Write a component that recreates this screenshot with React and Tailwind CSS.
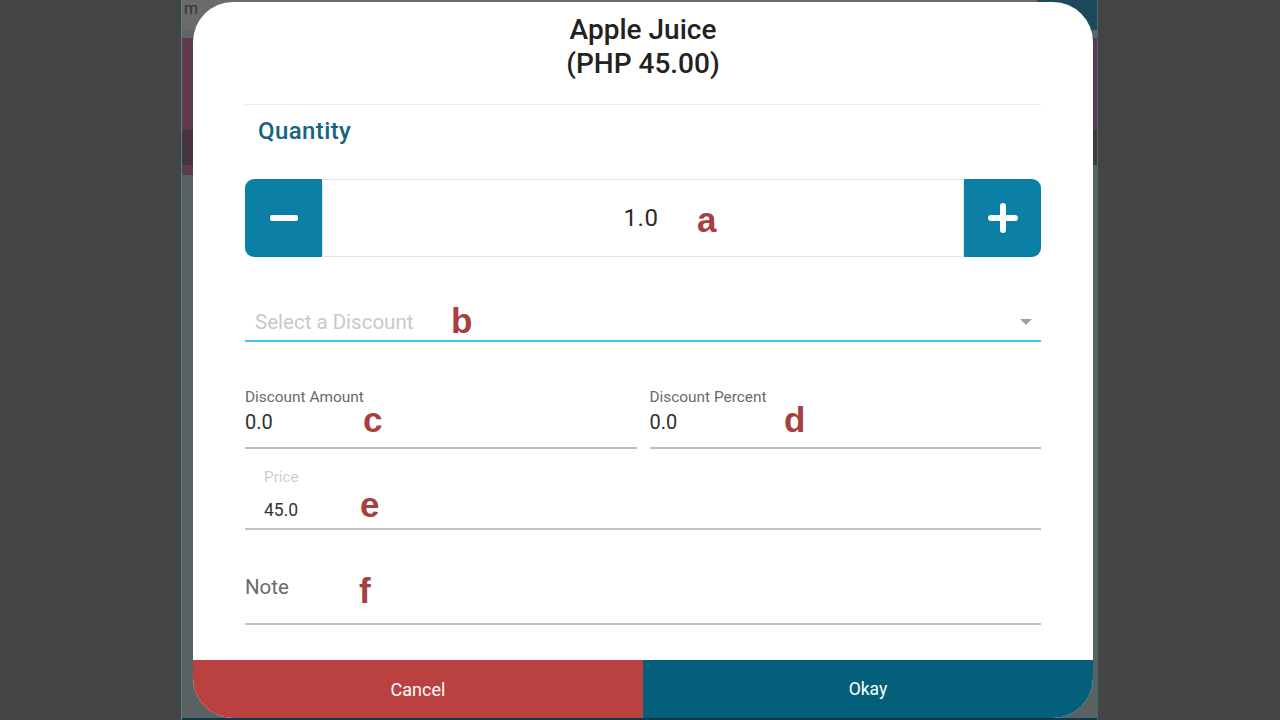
import React from 'react';

// red annotation letters that sit over the form
function Mark({ children, className }) {
  return (
    <span className={`absolute font-['Liberation_Sans',Arial,sans-serif] text-[35px] font-bold leading-none text-[#a63f3f] ${className}`}>
      {children}
    </span>
  );
}

function App() {
  return (
    <div className="relative flex h-[720px] w-[1280px] overflow-hidden bg-[#444444] font-['Roboto',sans-serif]">
      {/* dark side margins */}
      <div className="w-[181px] shrink-0 bg-[#444444]" />

      {/* dimmed app behind the modal */}
      <div className="flex w-[916px] shrink-0 flex-col border-l border-[#4d8396] bg-[#5b6060]">
        <div className="flex h-[30px]">
          <div className="flex-1 bg-[#6b6b6b] pl-[2px] text-[16px] leading-[18px] text-[#333]">m</div>
          <div className="w-[60px] bg-[#1c4a5c]" />
        </div>
        <div className="h-[8px] bg-[#5f6464]" />
        <div className="h-[92px] bg-[#5e3a4c]" />
        <div className="h-[35px] bg-[#47363e]" />
        <div className="h-[10px] w-[60px] rounded-br-[10px] bg-[#5e3a4c]" />
        <div className="flex-1" />
        <div className="h-[2px] bg-[#0d3a4a]" />
      </div>

      <div className="flex-1 border-l border-[#3e6a7a] bg-[#444444]" />

      {/* modal */}
      <div className="absolute left-[193px] top-[2px] flex h-[716px] w-[900px] flex-col overflow-hidden rounded-[40px] bg-white">
        <div className="pt-[11px] text-center text-[28px] font-medium leading-[34px] text-[#222]">
          <div>Apple Juice</div>
          <div>(PHP 45.00)</div>
        </div>

        <div className="px-[52px]">
          <div className="mt-[23px] h-px bg-[#ececec]" />

          <div className="mt-[11px] pl-[13px] text-[24px] font-medium leading-[30px] tracking-[0.4px] text-[#17647f]">Quantity</div>

          {/* stepper */}
          <div className="mt-[33px] flex h-[78px]">
            <button className="flex w-[77px] items-center justify-center rounded-l-[9px] bg-[#0b7fa4]">
              <span className="h-[6px] w-[28px] rounded-[2px] bg-white" />
            </button>
            <div className="flex flex-1 items-center justify-center rounded-[3px] border border-[#e2e2e2] text-[24px] tracking-[0.5px] text-[#2a2a2a]">
              <span className="-ml-[4px]">1.0</span>
            </div>
            <button className="flex w-[77px] items-center justify-center rounded-r-[9px] bg-[#0b7fa4]">
              <svg width="30" height="30" viewBox="0 0 30 30">
                <path d="M15 3v24M3 15h24" stroke="#fff" strokeWidth="6" strokeLinecap="round" />
              </svg>
            </button>
          </div>

          {/* discount select */}
          <div className="mt-[53px] flex items-center justify-between border-b-2 border-[#40c4f4] pb-[6px] pl-[10px] pr-[9px]">
            <span className="text-[20.5px] leading-[24px] text-[#c9c9c9]">Select a Discount</span>
            <svg width="12" height="6" viewBox="0 0 12 6">
              <path d="M0 0h12L6 6z" fill="#a0a0a0" />
            </svg>
          </div>

          {/* discount amount / percent */}
          <div className="mt-[46px] grid grid-cols-2 gap-[13px]">
            <div className="border-b-2 border-[#bdbdbd] pb-[13px]">
              <div className="text-[15.4px] leading-[18px] text-[#6a6a6a]">Discount Amount</div>
              <div className="mt-[4px] text-[20px] leading-[24px] text-[#2f2f2f]">0.0</div>
            </div>
            <div className="border-b-2 border-[#bdbdbd] pb-[13px]">
              <div className="text-[15.4px] leading-[18px] text-[#6a6a6a]">Discount Percent</div>
              <div className="mt-[4px] text-[20px] leading-[24px] text-[#2f2f2f]">0.0</div>
            </div>
          </div>

          {/* price */}
          <div className="mt-[19px] border-b-2 border-[#c4c4c4] pb-[7px] pl-[19px]">
            <div className="text-[15.3px] leading-[18px] text-[#cfcfcf]">Price</div>
            <div className="mt-[13px] text-[17.5px] leading-[22px] text-[#333]">45.0</div>
          </div>

          {/* note */}
          <div className="mt-[45px] border-b-2 border-[#c4c4c4] pb-[24px]">
            <div className="text-[20.5px] leading-[24px] text-[#6a6a6a]">Note</div>
          </div>
        </div>

        <div className="mt-auto flex h-[58px]">
          <button className="flex-1 bg-[#bb4141] text-[18px] text-white">Cancel</button>
          <button className="flex-1 bg-[#04607a] text-[17.5px] text-white">Okay</button>
        </div>

        <Mark className="left-[504px] top-[200px]">a</Mark>
        <Mark className="left-[258px] top-[301px]">b</Mark>
        <Mark className="left-[170px] top-[400px]">c</Mark>
        <Mark className="left-[591px] top-[400px]">d</Mark>
        <Mark className="left-[167px] top-[485px]">e</Mark>
        <Mark className="left-[166px] top-[571px]">f</Mark>
      </div>
    </div>
  );
}

export default App;
